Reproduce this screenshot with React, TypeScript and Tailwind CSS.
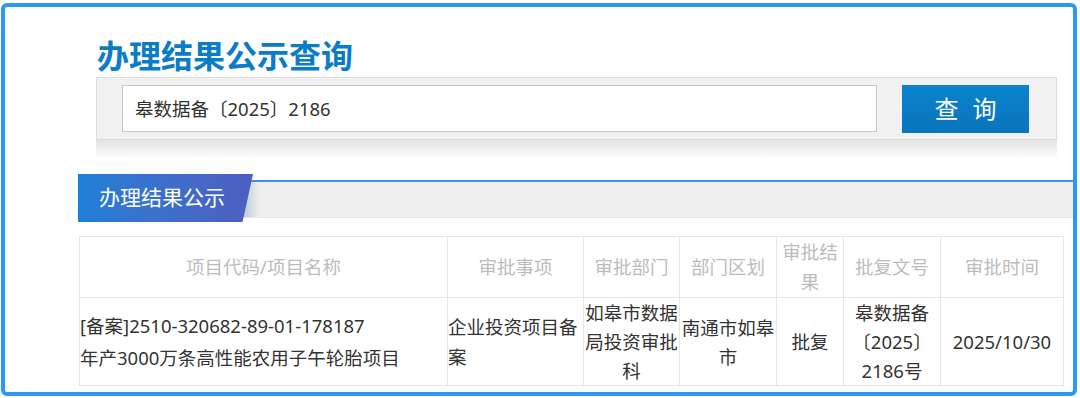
import React from "react";

type Column = {
  label: string;
  width: string;
};

const columns: Column[] = [
  { label: "项目代码/项目名称", width: "w-[368px]" },
  { label: "审批事项", width: "w-[136px]" },
  { label: "审批部门", width: "w-[96px]" },
  { label: "部门区划", width: "w-[97px]" },
  { label: "审批结果", width: "w-[67px]" },
  { label: "批复文号", width: "w-[97px]" },
  { label: "审批时间", width: "w-[123px]" },
];

function SearchPanel() {
  return (
    <div className="ml-[91px] mt-[5px] w-[961px]">
      <div className="flex h-[63px] items-start border border-[#dcdcdc] bg-[#f1f1f1] pl-[25px] pr-[27px] pt-[7px]">
        <div className="flex h-[47px] w-[755px] items-center border border-[#c6c6c6] bg-white pl-[12px] text-[18.5px] text-[#333]">
          皋数据备〔2025〕2186
        </div>
        <button
          type="button"
          className="ml-[25px] flex h-[48px] w-[127px] items-center justify-center bg-gradient-to-b from-[#0a83cd] to-[#0a74bc] pl-[4px] text-[24px] tracking-[4px] text-white"
        >
          查 询
        </button>
      </div>
      <div className="h-[20px] bg-gradient-to-b from-[#e4e4e4] to-white" />
    </div>
  );
}

function TabBar() {
  return (
    <div className="ml-[73px] mt-[14px] flex h-[48px]">
      <div className="relative z-10 -mr-[10px] flex h-[48px] w-[175px] items-center bg-gradient-to-r from-[#1d7fd6] to-[#4d5ebf] pl-[21px] text-[21px] text-white [clip-path:polygon(0_0,100%_0,94%_100%,0_100%)]">
        办理结果公示
      </div>
      <div className="flex flex-1 flex-col">
        <div className="h-[6px]" />
        <div className="h-[38px] border-t-2 border-b border-t-[#3f93dc] border-b-[#e6e6e6] bg-gradient-to-r from-[#b9c6d6] from-[0px] via-[#efefef] via-[16px] to-[#efefef]" />
      </div>
    </div>
  );
}

function ResultTable() {
  return (
    <div className="ml-[74px] mt-[14px]">
      <table className="table-fixed border-collapse text-[18.5px]">
        <colgroup>
          {columns.map((col) => (
            <col key={col.label} className={col.width} />
          ))}
        </colgroup>
        <thead>
          <tr>
            {columns.map((col) => (
              <th
                key={col.label}
                className="h-[60px] border border-[#e6e6e6] p-0 text-center align-middle font-normal leading-[30px] text-[#bcbcbc]"
              >
                {col.label}
              </th>
            ))}
          </tr>
        </thead>
        <tbody className="text-[#333]">
          <tr>
            <td className="h-[88px] border border-[#e6e6e6] p-0 text-left align-middle leading-[32px]">
              <div>[备案]2510-320682-89-01-178187</div>
              <div>年产3000万条高性能农用子午轮胎项目</div>
            </td>
            <td className="border border-[#e6e6e6] p-0 text-left align-middle leading-[30px]">
              企业投资项目备案
            </td>
            <td className="border border-[#e6e6e6] p-0 text-center align-middle leading-[29px]">
              如皋市数据局投资审批科
            </td>
            <td className="border border-[#e6e6e6] p-0 text-center align-middle leading-[29px]">
              南通市如皋市
            </td>
            <td className="border border-[#e6e6e6] p-0 text-center align-middle leading-[29px]">
              批复
            </td>
            <td className="border border-[#e6e6e6] p-0 text-center align-middle leading-[29px]">
              皋数据备〔2025〕2186号
            </td>
            <td className="border border-[#e6e6e6] p-0 text-center align-middle leading-[29px]">
              2025/10/30
            </td>
          </tr>
        </tbody>
      </table>
    </div>
  );
}

export default function App() {
  return (
    <div className="h-[398px] w-[1080px] bg-white pl-[1px] pt-[3px] font-['Noto_Sans','Noto_Sans_CJK_SC',sans-serif]">
      <div className="h-[393px] w-[1076px] overflow-hidden rounded-[6px] border-4 border-[#2c98f2]">
        <div className="pl-[92px] pt-[33px]">
          <h1 className="text-[32px] font-bold leading-[32px] text-[#0b7cc6]">办理结果公示查询</h1>
        </div>
        <SearchPanel />
        <TabBar />
        <ResultTable />
      </div>
    </div>
  );
}
